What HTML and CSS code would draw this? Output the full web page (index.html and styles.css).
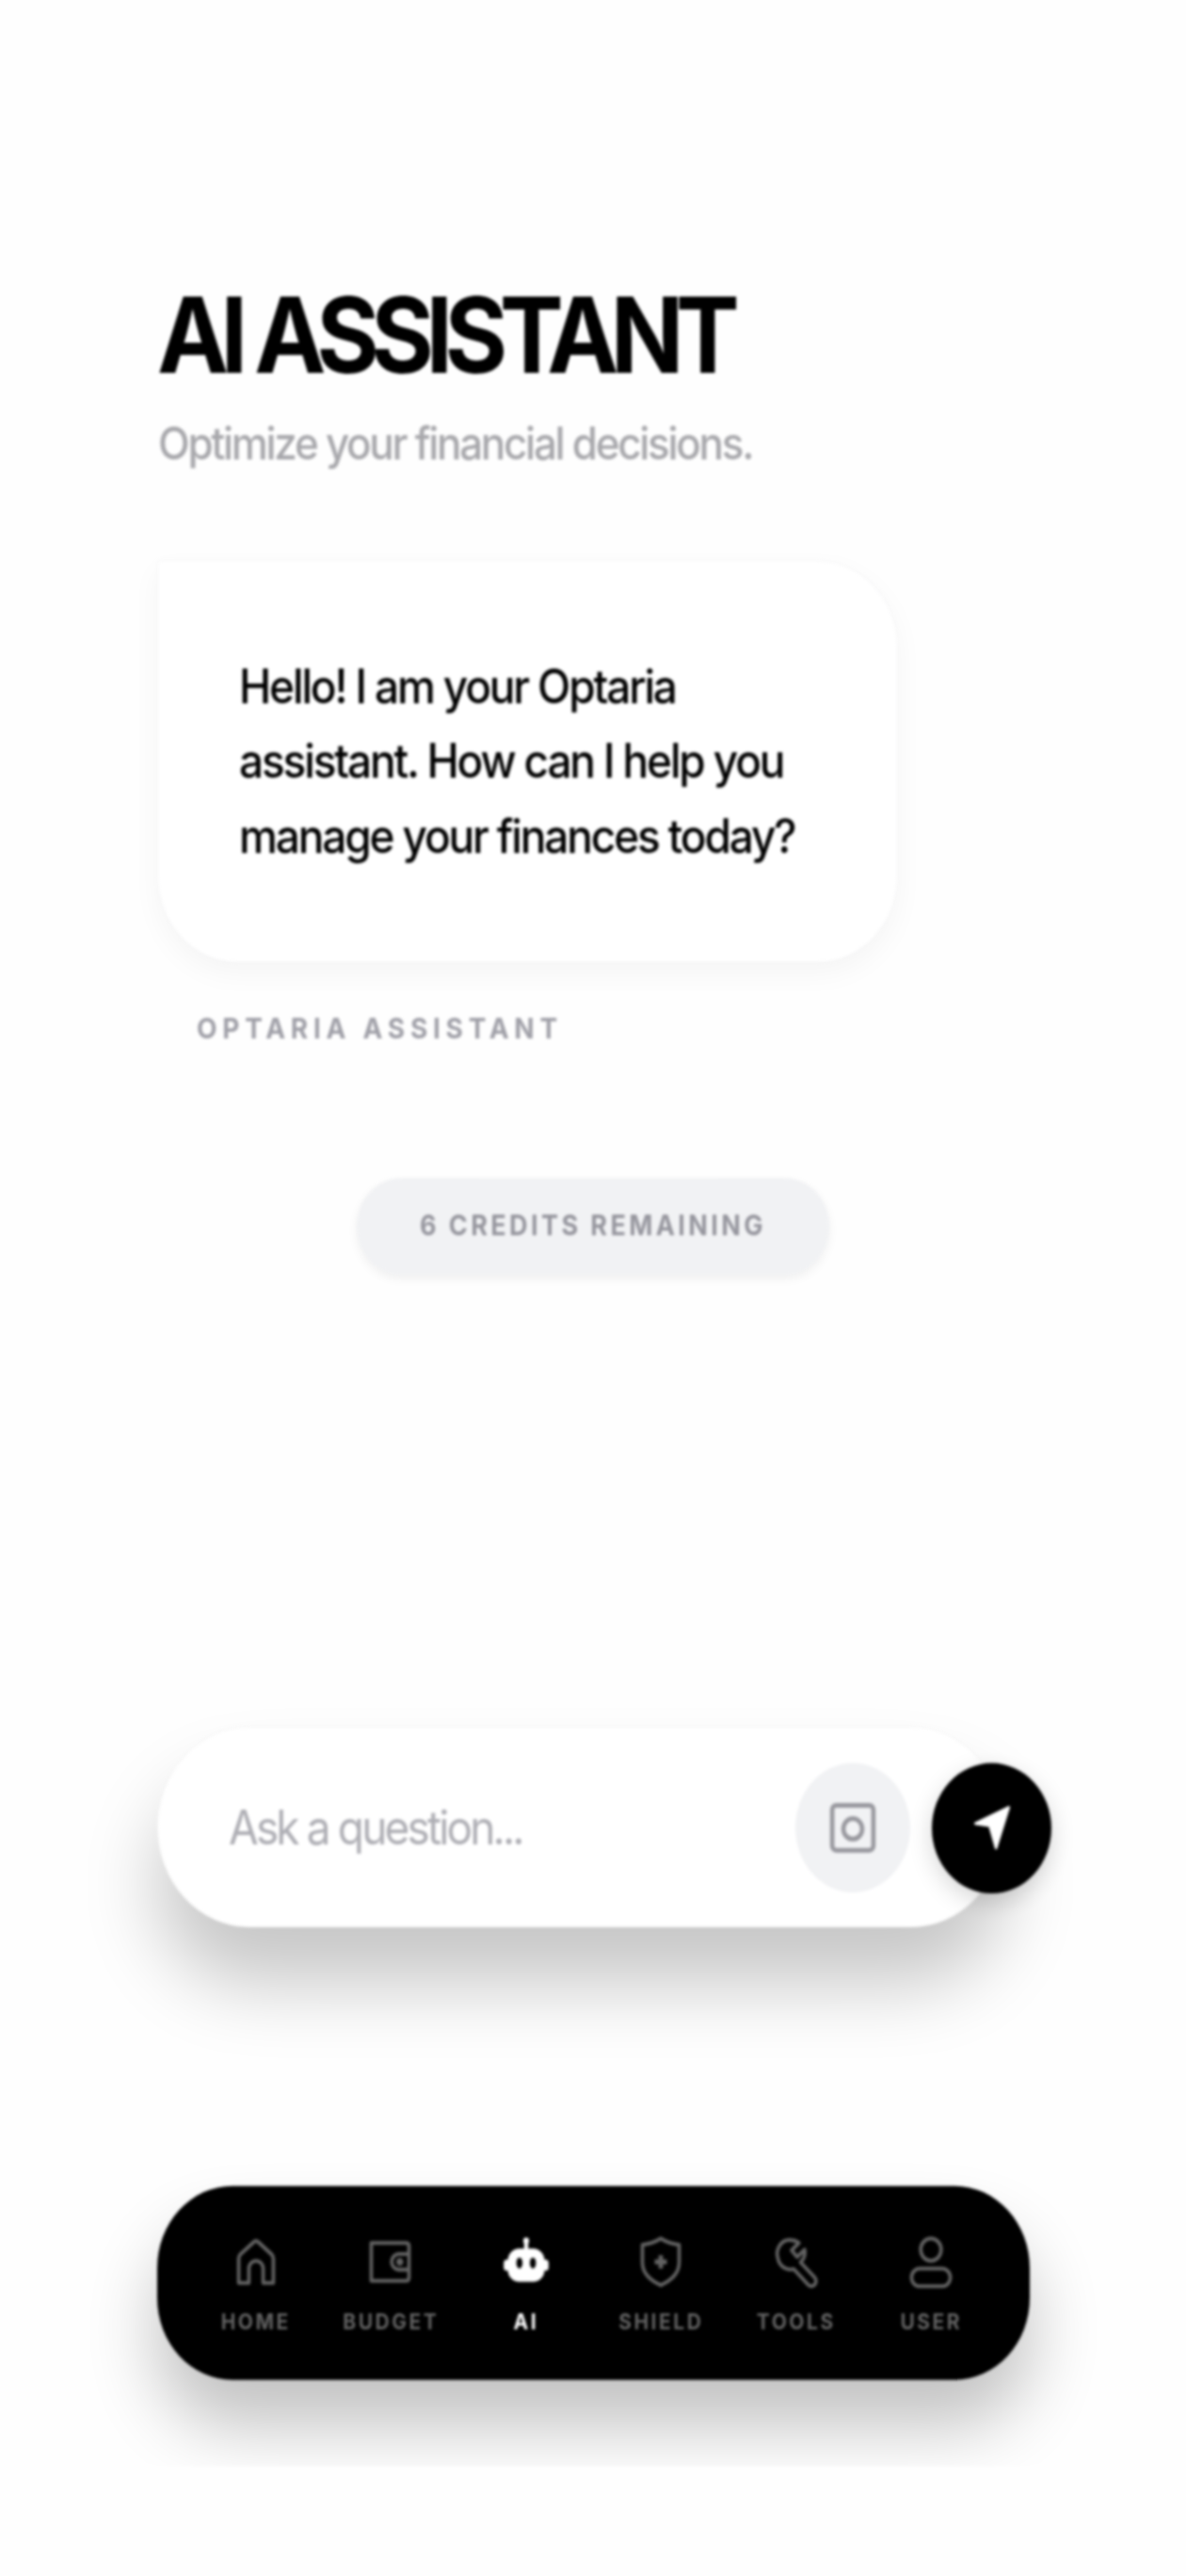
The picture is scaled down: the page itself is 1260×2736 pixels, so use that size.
FILE: index.html
```html
<!DOCTYPE html>
<html lang="en">
<head>
<meta charset="utf-8">
<title>AI Assistant</title>
<link rel="stylesheet" href="styles.css">
</head>
<body>
<main class="screen">
  <h1 class="title">AI ASSISTANT</h1>
  <p class="subtitle">Optimize your financial decisions.</p>
  <section class="bubble">
    <p class="bubble-text">Hello! I am your Optaria<br>assistant. How can I help you<br>manage your finances today?</p>
  </section>
  <p class="sender">OPTARIA ASSISTANT</p>
  <div class="credits">6 CREDITS REMAINING</div>
  <div class="composer">
    <span class="placeholder">Ask a question...</span>
    <button class="camera" type="button" aria-label="Camera">
      <svg class="camera-icon" viewBox="0 0 24 24" fill="none" stroke="currentColor" stroke-width="2.2"><rect x="1.500" y="1.500" width="21" height="21" rx="2"/><circle cx="12" cy="12.500" r="4.800"/><path d="M19 5.500h.01"/></svg>
    </button>
    <button class="send" type="button" aria-label="Send">
      <svg class="send-icon" viewBox="0 0 40 44" fill="#fff"><path d="M37 3 3 18 17.500 20 24 41Z" stroke="#fff" stroke-width="2.500" stroke-linejoin="round"/></svg>
    </button>
  </div>
  <div class="nav-wrap">
    <nav class="nav">
      <a class="nav-item">
        <svg class="nav-icon" viewBox="0 0 24 24" fill="none" stroke="currentColor" stroke-width="1.700" stroke-linejoin="round"><path d="M3.500 21.500V10.500c0-.8.3-1.400 1-2L11 3a1.500 1.500 0 0 1 2 0l6.500 5.500c.7.6 1 1.200 1 2v11h-5v-6.500a3.500 3.500 0 0 0-7 0v6.500z"/></svg>
        <span>HOME</span>
      </a>
      <a class="nav-item">
        <svg class="nav-icon" viewBox="0 0 24 24" fill="none" stroke="currentColor" stroke-width="1.700" stroke-linejoin="round"><path d="M2.500 3.500h17c1 0 1.500.6 1.500 1.500v14c0 1-.5 1.500-1.500 1.500h-17z"/><path d="M21.500 8.500H16a3.500 3.500 0 0 0 0 7h5.500"/><circle cx="16.500" cy="12" r=".9"/></svg>
        <span>BUDGET</span>
      </a>
      <a class="nav-item is-active">
        <svg class="nav-icon" viewBox="0 0 24 24" fill="currentColor"><rect x="11" y="1.500" width="2" height="6"/><circle cx="12" cy="2.500" r="1.400"/><rect x="3" y="6" width="18" height="15" rx="5.500"/><rect x="1" y="11" width="3" height="5" rx="1.500"/><rect x="20" y="11" width="3" height="5" rx="1.500"/><ellipse cx="8.700" cy="12.500" rx="1.500" ry="2.500" fill="#000"/><ellipse cx="15.300" cy="12.500" rx="1.500" ry="2.500" fill="#000"/></svg>
        <span>AI</span>
      </a>
      <a class="nav-item">
        <svg class="nav-icon" viewBox="0 0 24 24" fill="none" stroke="currentColor" stroke-width="1.700" stroke-linejoin="round"><path d="M12 1.500c3 1.800 5.500 2.500 9 2.800v8c0 4.700-3.500 7.900-9 10.200-5.500-2.300-9-5.500-9-10.200v-8c3.500-.3 6-1 9-2.800z"/><path d="M12 9v6M9 12h6" stroke-width="2.200"/></svg>
        <span>SHIELD</span>
      </a>
      <a class="nav-item">
        <svg class="nav-icon" viewBox="0 0 24 24" fill="none" stroke="currentColor" stroke-width="1.700" stroke-linejoin="round"><path d="M9.500 2.200a6 6 0 0 1 3.800 1.300l-3.600 3.300 2.700 3 3.700-3.300a6 6 0 0 1-2 5.700l6.900 6.800c1 1.100.8 2.500-.1 3.300-1 .9-2.300.8-3.200-.1l-7-7a6.200 6.200 0 0 1-7.700-4.700A6.200 6.200 0 0 1 9.500 2.200z"/></svg>
        <span>TOOLS</span>
      </a>
      <a class="nav-item">
        <svg class="nav-icon" viewBox="0 0 24 24" fill="none" stroke="currentColor" stroke-width="1.700"><circle cx="12" cy="6.500" r="5"/><rect x="2.500" y="15" width="19" height="8" rx="4"/></svg>
        <span>USER</span>
      </a>
    </nav>
  </div>
</main>
</body>
</html>
```
FILE: styles.css
```css
* { box-sizing: border-box; }

html, body {
  margin: 0;
  height: 2736px;
  overflow: hidden;
  background: #fefefe;
}

.screen {
  width: 1260px;
  height: 2510px;
  padding: 275px 167px 0;
  display: flex;
  flex-direction: column;
  align-items: flex-start;
  font-family: Inter, "Liberation Sans", sans-serif;
  transform: scaleY(1.09);
  transform-origin: top left;
  filter: blur(1.4px);
}

.title {
  margin: 0;
  font-size: 102px;
  line-height: 1;
  font-weight: 700;
  letter-spacing: -8.600px;
  color: #000;
  white-space: nowrap;
}

.subtitle {
  margin: 29px 0 0;
  padding-left: 1px;
  font-size: 44px;
  line-height: 1.2;
  font-weight: 500;
  letter-spacing: -2.300px;
  color: #a8a8ac;
  white-space: nowrap;
}

.bubble {
  margin-top: 87px;
  width: 787px;
  height: 392px;
  padding: 85px 86px;
  background: #fff;
  border: 1px solid #f5f5f6;
  border-radius: 4px 85px 85px 85px;
  box-shadow: 0 10px 30px rgba(0, 0, 0, 0.04);
}

.bubble-text {
  margin: 0;
  font-size: 46px;
  line-height: 73px;
  font-weight: 500;
  letter-spacing: -2.150px;
  color: #000;
  white-space: nowrap;
}

.sender {
  margin: 49px 0 0 42px;
  font-size: 28px;
  line-height: 30px;
  font-weight: 700;
  letter-spacing: 5.750px;
  color: #a0a0a8;
}

.credits {
  align-self: center;
  margin-top: 131px;
  width: 502px;
  height: 94px;
  display: flex;
  align-items: center;
  justify-content: center;
  background: #f1f2f4;
  border-radius: 47px;
  box-shadow: 0 4px 10px rgba(0, 0, 0, 0.06);
  font-size: 27px;
  font-weight: 700;
  letter-spacing: 3.400px;
  color: #96969e;
}

.composer {
  margin-top: 440px;
  width: 899px;
  height: 196px;
  padding: 3px 0 0 75px;
  display: flex;
  align-items: center;
  background: #fff;
  border: 1px solid #f4f4f4;
  border-radius: 98px;
  box-shadow: 0 55px 75px rgba(0, 0, 0, 0.22);
}

.placeholder {
  flex: 1;
  margin-bottom: 3px;
  font-size: 46px;
  font-weight: 400;
  letter-spacing: -2.850px;
  color: #aeaeb4;
  white-space: nowrap;
}

.camera,
.send {
  flex: none;
  padding: 0;
  border: 0;
  border-radius: 50%;
  display: flex;
  align-items: center;
  justify-content: center;
}

.camera {
  width: 122px;
  height: 126px;
  background: #f1f2f4;
  color: #98989e;
}

.camera-icon {
  width: 54px;
  height: 50px;
}

.send {
  width: 127px;
  height: 127px;
  margin-left: 23px;
  margin-right: -52px;
  background: #000;
  box-shadow: 0 8px 24px rgba(0, 0, 0, 0.16);
}

.send-icon {
  width: 42px;
  height: 46px;
}

.nav-wrap {
  margin: 212px -100px 0;
  padding: 40px 100px 84px;
  width: 1126px;
  overflow: hidden;
  border-radius: 0 0 110px 110px;
}

.nav {
  width: 927px;
  height: 189px;
  padding: 0 33px;
  display: grid;
  grid-template-columns: repeat(6, 143.500px);
  background: #000;
  border-radius: 80px;
  box-shadow: 0 45px 70px rgba(0, 0, 0, 0.24);
}

.nav-item {
  display: flex;
  flex-direction: column;
  align-items: center;
  padding-top: 48px;
  color: #626262;
  font-size: 21px;
  line-height: 26px;
  font-weight: 700;
  letter-spacing: 2.500px;
}

.nav-item.is-active {
  color: #fff;
}

.nav-icon {
  width: 52px;
  height: 52px;
  margin-bottom: 20px;
}
```
